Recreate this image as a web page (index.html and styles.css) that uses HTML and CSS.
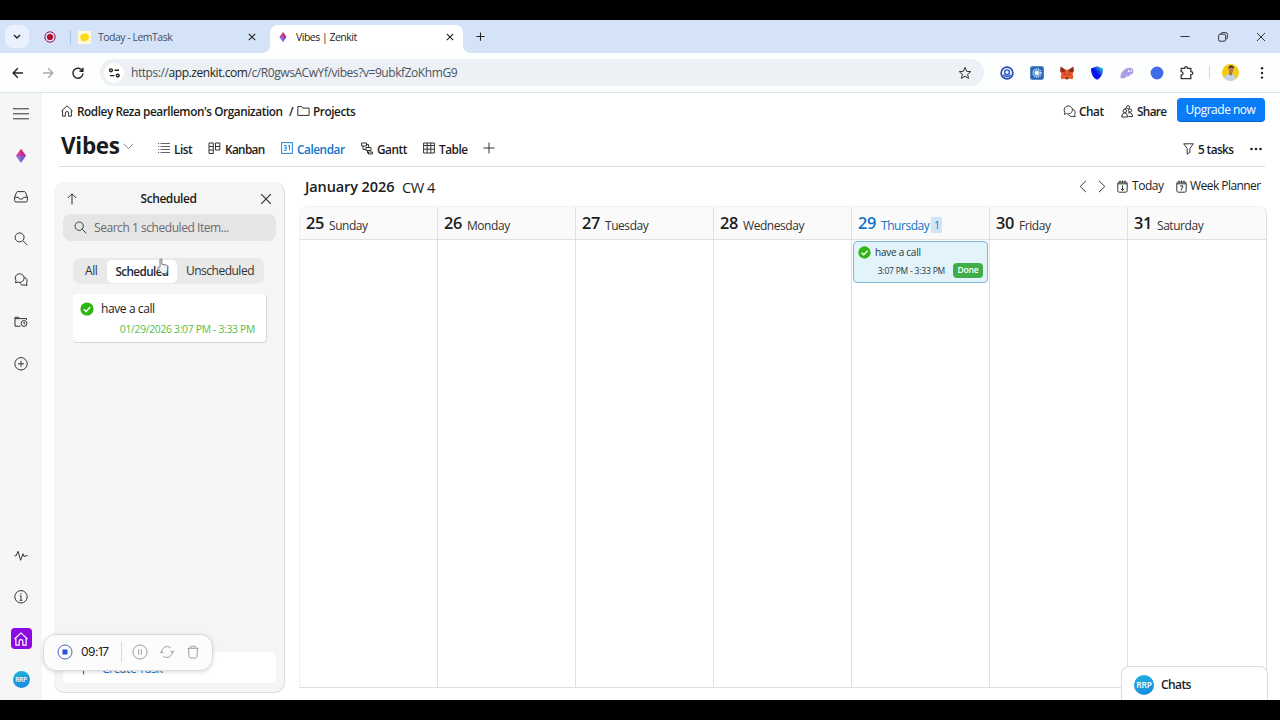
FILE: index.html
```html
<!DOCTYPE html>
<html lang="en">
<head>
  <meta charset="UTF-8" />
  <meta name="viewport" content="width=device-width, initial-scale=1.0" />
  <title>Vibes | Zenkit</title>
  <link rel="stylesheet" href="styles.css">
</head>
<body>
  <svg class="defs" width="0" height="0">
    <defs>
      <linearGradient id="gem" x1="0" y1="0" x2="1" y2="1">
        <stop offset="0.2" stop-color="#f0387c" />
        <stop offset="0.55" stop-color="#b03cb4" />
        <stop offset="0.9" stop-color="#2c6ee8" />
      </linearGradient>
      <linearGradient id="shieldFill" x1="0" y1="1" x2="1" y2="0">
        <stop offset="0.5" stop-color="#0a14f0" />
        <stop offset="1" stop-color="#30f0c0" />
      </linearGradient>
    </defs>
    <symbol id="i-gem" viewBox="0 0 10 14"><g stroke="none"><path d="M5 0 10 7 5 14 0 7z" fill="url(#gem)" /><path d="M5 0 10 7H5z" fill="#e8186c" opacity=".6" /><path d="M0 7h5v7z" fill="#6c8cf0" opacity=".7" /></g></symbol>
    <symbol id="i-x" viewBox="0 0 10 10"><path d="M1 1l8 8M9 1l-8 8" /></symbol>
    <symbol id="i-plus" viewBox="0 0 12 12"><path d="M6 .5v11M.5 6h11" /></symbol>
    <symbol id="i-chats" viewBox="0 0 14 14"><path d="M5.6 1a4.6 4.3 0 1 1-1.7 8.3L1.4 10l.6-2.2A4.3 4.3 0 0 1 5.6 1z" /><path d="M10.4 4.5a3.9 3.9 0 0 1 2.1 5.9l.5 2.3-2.2-.5a4.5 4.5 0 0 1-5.2-2" /></symbol>
    <symbol id="i-home" viewBox="0 0 12 12"><path d="M1.6 5.2v6h2.8V8.1a1.6 1.6 0 0 1 3.2 0v3.1h2.8v-6M.5 6 6 .8 11.5 6" /></symbol>
    <symbol id="i-search" viewBox="0 0 14 14"><circle cx="5.6" cy="5.6" r="4.5" /><path d="M9 9l4.3 4.3" /></symbol>
    <symbol id="i-check" viewBox="0 0 14 14"><circle cx="7" cy="7" r="6.6" fill="#2fb613" stroke="none" /><path d="M3.8 7.2 6.2 9.5l4-4.4" stroke="#fff" stroke-width="1.5" /></symbol>
  </svg>

  <div class="tabstrip">
    <div class="tab-search"><svg width="8" height="6" viewBox="0 0 8 6" class="bold"><path d="M1 1l3 3 3-3" /></svg></div>
    <svg class="record" width="12" height="12" viewBox="0 0 12 12"><circle cx="6" cy="6" r="5.2" stroke="#a01538" /><circle cx="6" cy="6" r="3.1" fill="#b0102e" stroke="none" /></svg>
    <div class="tab">
      <span class="favicon"><svg width="13" height="13" viewBox="0 0 13 13"><path d="M2.2 6.3C2.4 3 5 2.4 7.2 2.5c2.6 0 3.8 1.7 3.8 3.6 0 2.6-2.2 4.3-4.8 4.2C3.8 10.2 2.1 9 2.2 6.3z" fill="#ffd918" stroke="none" /></svg></span>
      <span class="tab-title">Today - LemTask</span>
      <svg class="bold" width="8" height="8"><use href="#i-x" /></svg>
    </div>
    <div class="tab active">
      <svg width="8" height="10"><use href="#i-gem" /></svg>
      <span class="tab-title">Vibes | Zenkit</span>
      <svg class="bold" width="8" height="8"><use href="#i-x" /></svg>
    </div>
    <svg class="new-tab bold" width="9" height="9"><use href="#i-plus" /></svg>
    <div class="window-controls">
      <svg width="10" height="10" viewBox="0 0 10 10"><path d="M.5 4.5h9" /></svg>
      <svg width="10" height="10" viewBox="0 0 10 10"><rect x=".6" y="2.2" width="7" height="7" rx="1.5" /><path d="M3 2V1.7Q3 .6 4.2.6h3.5q1.7 0 1.7 1.7v3.5q0 1.2-1.3 1.3" /></svg>
      <svg width="10" height="10"><use href="#i-x" /></svg>
    </div>
  </div>

  <div class="toolbar">
    <div class="nav-icons">
      <svg width="12" height="12" viewBox="0 0 12 12" class="bold"><path d="M11 6H1.3M5.8 1.3 1.2 6l4.6 4.7" /></svg>
      <svg width="12" height="12" viewBox="0 0 12 12" class="bold faded"><path d="M1 6h9.7M6.2 1.3 10.8 6l-4.6 4.7" /></svg>
      <svg width="12" height="12" viewBox="0 0 12 12" class="bold"><path d="M10.4 3.8A5 5 0 1 0 11 6.5M10.9.8v3.4H7.5" /></svg>
    </div>
    <div class="address">
      <span class="site-info"><svg width="11" height="10" viewBox="0 0 11 10" class="bold"><circle cx="2" cy="2.3" r="1.4" /><path d="M5.5 2.3H10M1 7.6h4.5" /><circle cx="8.8" cy="7.6" r="1.4" /></svg></span>
      <span class="url">https://<b>app.zenkit.com</b>/c/R0gwsACwYf/vibes?v=9ubkfZoKhmG9</span>
      <svg width="14" height="14" viewBox="0 0 14 14"><path d="M7 1.4 8.6 5.3l4.2.3-3.2 2.7 1 4.1L7 10.2l-3.6 2.2 1-4.1L1.2 5.6l4.2-.3z" /></svg>
    </div>
    <div class="extensions">
      <svg viewBox="0 0 14 14"><circle cx="7" cy="7" r="5.9" fill="#eef2ff" stroke="#2a4fae" stroke-width="1.7" /><circle cx="7" cy="6.3" r="2.4" stroke="#3155c4" stroke-width="1.4" /><path d="M3 8.8q4 3.5 8 0" stroke="#3155c4" stroke-width="1.3" /></svg>
      <svg viewBox="0 0 14 14"><rect x=".2" y=".2" width="13.6" height="13.6" rx="2" fill="#2868b8" stroke="none" /><circle cx="7" cy="7" r="3.9" stroke="#d3e6fa" stroke-width="1.5" stroke-dasharray="1.2 .7" /><circle cx="7" cy="7" r="2.5" fill="#fff" stroke="#7fb0e6" /></svg>
      <svg viewBox="0 0 14 14"><g stroke="none"><path d="M.8.8 5.5 3.7h3L13.2.8l.6 4.5-1.2 2.7.8 3-1 2.2-3.4-.8-1 1H6l-1-1-3.4.8L.6 11l.8-3L.2 5.3z" fill="#e8582c" /><path d="M.8.8 5.5 4 4.4 6.5.2 5.3zM13.2.8 8.5 4l1.1 2.5 4.2-1.2z" fill="#8c2c1c" /><path d="M3.6 7.5l2 .8-.3.8zM10.4 7.5l-2 .8.3.8zM5.5 11.5h3l-.4 1.2H5.9z" fill="#40201c" /></g></svg>
      <svg viewBox="0 0 14 14"><path d="M7 .2 13 2.4c0 6-2 9-6 11.4C3 11.4 1 8.4 1 2.4z" fill="url(#shieldFill)" stroke="none" /></svg>
      <svg viewBox="0 0 14 14"><path d="M.3 11C1 6 4.5 2 8.8 1.7 12.5 1.5 14 4 13.4 6.3c-.4 1.7-1.8 2.4-3 2.2-1.2 2-2.4 2.6-3.8 1.8C5 12.7 2.8 13 1.8 12 .9 12.5.2 12 .3 11z" fill="#ab9fe6" stroke="none" /><circle cx="8.8" cy="5" r=".9" fill="#fff" stroke="none" /><circle cx="11.4" cy="5" r=".8" fill="#fff" stroke="none" /></svg>
      <svg viewBox="0 0 14 14"><circle cx="7" cy="7" r="6.4" fill="#3f6ae8" stroke="none" /></svg>
      <svg viewBox="0 0 14 14" class="puzzle"><path d="M1.2 2.4h3.4q0-1.7 1.4-1.7t1.4 1.7h3.4v3.3q2 0 2 1.5t-2 1.5v3.9H1.2V9.2Q3 9 3 7.4T1.2 5.6z" /></svg>
      <span class="divider"></span>
      <svg class="profile" viewBox="0 0 17 17"><circle cx="8.5" cy="8.5" r="8.5" fill="#f4ca12" stroke="none" /><g stroke="none"><path d="M2 14Q3.5 10 8.5 9.5q5 .5 5 5.5A8.5 8.5 0 0 1 2 14z" fill="#c3d4ea" /><path d="M7 7h3.5l-.5 3.5L8.5 12 7 10z" fill="#a8714e" /><ellipse cx="9" cy="5.5" rx="2.3" ry="3" fill="#b47c58" /><path d="M6.5 5Q6 1.5 9.2 1.5T11.6 5L10.5 3.5h-3z" fill="#2c2420" /></g></svg>
      <svg viewBox="0 0 14 14"><g fill="#222" stroke="none"><circle cx="7" cy="2.3" r="1.2" /><circle cx="7" cy="7" r="1.2" /><circle cx="7" cy="11.6" r="1.2" /></g></svg>
    </div>
  </div>

  <div class="app">
    <nav class="sidebar">
      <svg width="16" height="12" viewBox="0 0 16 12"><path d="M0 1h16M0 6h16M0 11h16" /></svg>
      <svg width="10" height="14"><use href="#i-gem" /></svg>
      <svg width="14" height="12" viewBox="0 0 14 12"><path d="M.6 6.5 2.5 1.7Q2.8.8 3.8.8h6.4q1 0 1.3.9l1.9 4.8V9.7q0 1.5-1.5 1.5H2.1Q.6 11.2.6 9.7zH4.3Q4.8 8.4 7 8.4t2.7-1.9h3.7" /></svg>
      <svg width="14" height="14"><use href="#i-search" /></svg>
      <svg width="14" height="14"><use href="#i-chats" /></svg>
      <svg width="14" height="12" viewBox="0 0 14 12"><path d="M6.5 10.4H1V1.5h3.7l1.1 1.3h6.7v1.4M1 2.8h4.8" /><circle cx="10" cy="7.7" r="2.9" /><path d="M10 6v1.9h1.3" /></svg>
      <svg width="14" height="14" viewBox="0 0 14 14"><circle cx="7" cy="7" r="6.2" /><path d="M7 4v6M4 7h6" /></svg>
      <span class="spacer"></span>
      <svg width="14" height="12" viewBox="0 0 14 12"><path d="M.5 6h1.7L4 1.5l2.6 9L9 4l1.2 3 .8-1h2.5" /></svg>
      <svg width="14" height="14" viewBox="0 0 14 14"><circle cx="7" cy="7" r="6.2" /><path d="M7 6v4.5M5.8 6H7M5.7 10.5h2.6M7 3.3v1.2" /></svg>
      <span class="home-tile"><svg width="14" height="14"><use href="#i-home" /></svg></span>
      <span class="avatar small">RRP</span>
    </nav>

    <main>
      <div class="crumbs">
        <svg width="12" height="12"><use href="#i-home" /></svg>
        <span class="org">Rodley Reza pearllemon's Organization</span>
        <span class="slash">/</span>
        <svg width="13" height="12" viewBox="0 0 13 12"><path d="M.8 10.4V1.6h3.9l1.2 1.5h6.2v7.3z" /></svg>
        <span class="project">Projects</span>
        <div class="crumb-actions">
          <svg width="13" height="13"><use href="#i-chats" /></svg>
          <span class="chat">Chat</span>
          <svg width="12" height="13" viewBox="0 0 12 13"><circle cx="7" cy="2.3" r="1.6" /><circle cx="3.8" cy="6" r="1.7" /><circle cx="9" cy="5.5" r="1.6" /><path d="M.7 12q0-4 3-4.2 2.7.2 2.9 4.2zM7 8q4-1.5 4.5 3.5H7.5M5 3.3Q3.5 3.3 3.3 4" /></svg>
          <span class="share">Share</span>
          <button class="upgrade">Upgrade now</button>
        </div>
      </div>

      <div class="views">
        <h1>Vibes</h1>
        <svg class="caret" width="11" height="7" viewBox="0 0 11 7"><path d="M.7.8l4.8 4.7L10.3.8" /></svg>
        <div class="view list"><svg width="12" height="12" viewBox="0 0 12 12"><path d="M2.5 1.5H12M2.5 4.5H12M2.5 7.5H12M2.5 10.5H12M0 1.5h1.2M0 4.5h1.2M0 7.5h1.2M0 10.5h1.2" /></svg><span>List</span></div>
        <div class="view kanban"><svg width="13" height="13" viewBox="0 0 13 13"><path d="M1 1h4.3v10.5H1zM1 4.5h4.3M1 8h4.3M7.5 1h4.3v7H7.5zM7.5 4.5h4.3" /></svg><span>Kanban</span></div>
        <div class="view calendar current"><svg width="12" height="12" viewBox="0 0 12 12"><rect x=".6" y=".6" width="10.8" height="10.8" /><path d="M2.8 3.3h2.4v5H2.8M3.2 5.8h2M7 4.2l1.5-1v5.2" /></svg><span>Calendar</span></div>
        <div class="view gantt"><svg width="12" height="13" viewBox="0 0 12 13"><path d="M.6 1h5v3h-5zM5 5.5h5v3H5zM7.5 10h4v2h-4zM2 4v3.5h3M6.5 8.5V11h1M5.6 2.5h2v3" /></svg><span>Gantt</span></div>
        <div class="view table"><svg width="12" height="12" viewBox="0 0 12 12"><path d="M.6 1h10.8v10H.6zM.6 3.5h10.8M.6 7.2h10.8M4.2 1v10M7.8 1v10" /></svg><span>Table</span></div>
        <svg class="add-view" width="12" height="12"><use href="#i-plus" /></svg>
        <div class="filter">
          <svg width="11" height="12" viewBox="0 0 11 12"><path d="M.7.8h9.6L6.9 5.6v3.7L4.2 11.2V5.6z" /></svg>
          <span>5 tasks</span>
          <svg width="12" height="4" viewBox="0 0 12 4"><g fill="#222" stroke="none"><circle cx="1.5" cy="2" r="1.3" /><circle cx="6" cy="2" r="1.3" /><circle cx="10.5" cy="2" r="1.3" /></g></svg>
        </div>
      </div>

      <div class="content">
        <aside class="panel">
          <div class="panel-head">
            <svg width="10" height="12" viewBox="0 0 10 12"><path d="M5 11.5V1M.8 5 5 .8 9.2 5" /></svg>
            <span>Scheduled</span>
            <svg width="12" height="12"><use href="#i-x" /></svg>
          </div>
          <div class="search"><svg width="13" height="13"><use href="#i-search" /></svg><span>Search 1 scheduled Item...</span></div>
          <div class="segments">
            <span class="seg-all">All</span>
            <span class="seg-on">Scheduled</span>
            <span class="seg-off">Unscheduled</span>
            <svg class="pointer" width="12" height="17" viewBox="0 0 12 17"><path d="M3 9V1.8Q3 .8 3.9.8t.9 1v4.4l4.6.9q1.5.4 1.4 1.7l-.6 4.4-.8 2.3H4.9L1 10.5Q.5 9.6 1.4 9z" /></svg>
          </div>
          <div class="task">
            <div class="task-name"><svg width="14" height="14"><use href="#i-check" /></svg><span>have a call</span></div>
            <div class="task-date">01/29/2026 3:07 PM - 3:33 PM</div>
          </div>
          <div class="create"><svg width="13" height="13"><use href="#i-plus" /></svg><span>Create Task</span></div>
        </aside>

        <section class="calendar-view">
          <div class="cal-head">
            <span class="month">January 2026</span>
            <span class="week">CW 4</span>
            <div class="cal-nav">
              <svg width="8" height="13" viewBox="0 0 8 13"><path d="M7 .8 1.2 6.5 7 12.2" /></svg>
              <svg width="8" height="13" viewBox="0 0 8 13"><path d="M1 .8l5.8 5.7L1 12.2" /></svg>
              <svg width="11" height="13" viewBox="0 0 11 13"><rect x=".8" y="2" width="9.4" height="10.2" rx="1.5" /><path d="M.8 3.8h9.4M3 .6v2.6M5.5.6v2.6M8 .6v2.6M5.5 5.5v4.8M3.8 8.7l1.7 1.7 1.7-1.7" /></svg>
              <span class="today">Today</span>
              <svg width="11" height="13" viewBox="0 0 11 13"><rect x=".8" y="2" width="9.4" height="10.2" rx="1.5" /><path d="M.8 3.8h9.4M3 .6v2.6M5.5.6v2.6M8 .6v2.6M4 6h3L5 10.4" /></svg>
              <span class="planner">Week Planner</span>
            </div>
          </div>
          <div class="days">
            <div class="day"><header><b>25</b><span>Sunday</span></header></div>
            <div class="day"><header><b>26</b><span>Monday</span></header></div>
            <div class="day"><header><b>27</b><span>Tuesday</span></header></div>
            <div class="day"><header><b>28</b><span>Wednesday</span></header></div>
            <div class="day is-today">
              <header><b>29</b><span>Thursday</span><i>1</i></header>
              <div class="event">
                <div class="event-name"><svg width="13" height="13"><use href="#i-check" /></svg><span>have a call</span></div>
                <div class="event-time"><span>3:07 PM - 3:33 PM</span><em>Done</em></div>
              </div>
            </div>
            <div class="day"><header><b>30</b><span>Friday</span></header></div>
            <div class="day"><header><b>31</b><span>Saturday</span></header></div>
          </div>
        </section>
      </div>
    </main>
  </div>

  <div class="recorder">
    <svg width="16" height="16" viewBox="0 0 16 16" class="stop"><circle cx="8" cy="8" r="7" /><rect x="5.5" y="5.5" width="5" height="5" rx=".6" fill="#2b50d8" stroke="none" /></svg>
    <span class="time">09:17</span>
    <span class="divider"></span>
    <svg width="16" height="16" viewBox="0 0 16 16"><circle cx="8" cy="8" r="7" /><path d="M6.6 5.2v5.6M9.4 5.2v5.6" /></svg>
    <svg width="16" height="16" viewBox="0 0 16 16"><path d="M2.6 9A5.7 5.7 0 0 1 11.8 3.7M13.4 7a5.7 5.7 0 0 1-9.2 5.3M.8 9.2l1.8-1.8 1.9 1.7M15.2 6.8l-1.8 1.8-1.9-1.7" /></svg>
    <svg width="14" height="16" viewBox="0 0 14 16"><path d="M1.5 4.3h11M4.5 4V2.3h5V4M2.5 4.3l.6 8.2q.1 1.5 1.5 1.5h4.8q1.4 0 1.5-1.5l.6-8.2" /></svg>
  </div>

  <div class="chats"><span class="avatar">RRP</span><span>Chats</span></div>
</body>
</html>
```
FILE: styles.css
```css
* {
  box-sizing: border-box;
}
body {
  position: relative;
  margin: 0;
  width: 1280px;
  height: 720px;
  padding: 20px 0;
  overflow: hidden;
  background: #000;
  color: #1b1b1b;
  font-family: "Open Sans", "Noto Sans", sans-serif;
  font-size: 12px;
  line-height: 16px;
  letter-spacing: -.45px;
  white-space: nowrap;
}
svg {
  flex: none;
  fill: none;
  stroke: #333;
  stroke-width: 1;
}
.bold {
  stroke: #222;
  stroke-width: 1.4;
}
.puzzle {
  stroke-width: 1.3;
}
.faded {
  stroke: #aaa;
}
.defs {
  position: absolute;
}

/* browser */
.tabstrip {
  display: flex;
  align-items: center;
  height: 33px;
  padding-left: 5px;
  background: #d5e3f9;
}
.tab-search {
  display: flex;
  align-items: center;
  justify-content: center;
  width: 24px;
  height: 23px;
  border-radius: 8px;
  background: #e9f1fe;
}
.record {
  margin: 0 13px 0 15px;
}
.tab {
  display: flex;
  align-items: center;
  width: 195px;
  height: 28px;
  margin-top: 5px;
  padding: 0 8px 4px 8px;
  border-left: 1px solid transparent;
  font-size: 10.5px;
  letter-spacing: -.5px;
  color: #444f5e;
  background: linear-gradient(#a6c4ee, #a6c4ee) 0 5px / 1px 14px no-repeat;
}
.tab-title {
  flex: 1;
}
.favicon {
  height: 13px;
  margin-right: 7px;
  background: #fff9d8;
}
.tab.active {
  position: relative;
  width: 193px;
  padding: 0 9px 4px 8px;
  border-radius: 8px 8px 0 0;
  background: #fff;
  color: #222;
}
.tab.active .tab-title {
  margin-left: 9px;
}
.tab + .tab {
  margin-left: 6px;
}
.tab.active::before,
.tab.active::after {
  content: "";
  position: absolute;
  bottom: 0;
  width: 7px;
  height: 7px;
  left: -8px;
  background: radial-gradient(circle at 0 0, transparent 6.5px, #fff 7px);
}
.tab.active::after {
  left: auto;
  right: -7px;
  background: radial-gradient(circle at 100% 0, transparent 6.5px, #fff 7px);
}
.new-tab {
  margin-left: 13px;
}
.window-controls {
  display: flex;
  gap: 28px;
  margin-left: auto;
  margin-right: 14px;
}
.toolbar {
  display: flex;
  align-items: center;
  height: 40px;
  border-bottom: 1px solid #dbe5ea;
  background: #fdfefe;
}
.nav-icons {
  display: flex;
  gap: 18px;
  width: 100px;
  padding-left: 12px;
}
.address {
  display: flex;
  align-items: center;
  width: 884px;
  height: 27px;
  padding: 0 12px 0 4px;
  border-radius: 14px;
  background: #edf1f6;
}
.site-info {
  display: flex;
  align-items: center;
  justify-content: center;
  width: 20px;
  height: 20px;
  border-radius: 50%;
  background: #fff;
}
.url {
  flex: 1;
  margin-left: 7px;
  padding-top: 1px;
  color: #4c535b;
  letter-spacing: -.43px;
}
.url b {
  font-weight: 400;
  color: #1c1e21;
}
.extensions {
  display: flex;
  align-items: center;
  gap: 16px;
  margin-left: 16px;
}
.extensions svg {
  width: 14px;
  height: 14px;
}
.extensions .divider {
  width: 1px;
  height: 13px;
  margin: 0 -4px 0 -1px;
  background: #c9d7e8;
}
.extensions .profile {
  width: 17px;
  height: 17px;
}

/* app shell */
.app {
  display: flex;
  height: 607px;
  background: #fff;
}
.sidebar {
  display: flex;
  flex: none;
  flex-direction: column;
  align-items: center;
  width: 42px;
  padding-bottom: 12px;
  background: #f6f6f7;
}
.sidebar > svg {
  height: 41.6px;
}
.spacer {
  flex: 1;
}
.home-tile {
  display: flex;
  align-items: center;
  justify-content: center;
  width: 21px;
  height: 21px;
  margin: 10px 0 22px;
  border-radius: 4px;
  background: #8c0ae0;
}
.home-tile svg {
  stroke: #fff;
}
.avatar {
  display: flex;
  align-items: center;
  justify-content: center;
  width: 20px;
  height: 20px;
  border-radius: 50%;
  background: linear-gradient(160deg, #22b4de, #1686dc);
  color: #fff;
  font-size: 8.5px;
  font-weight: 600;
  letter-spacing: -.2px;
}
.avatar.small {
  width: 17px;
  height: 17px;
  font-size: 6.5px;
}
main {
  flex: 1;
  padding-right: 14px;
}
.crumbs {
  display: flex;
  align-items: center;
  height: 36px;
  padding: 0 2px 0 19px;
  font-size: 11.8px;
  font-weight: 600;
}
.org {
  width: 206px;
  margin: 0 6px 0 4px;
}
.slash {
  width: 8px;
}
.project {
  margin-left: 3px;
}
.crumb-actions {
  display: flex;
  align-items: center;
  margin-left: auto;
}
.chat {
  width: 25px;
  margin: 0 17px 0 3px;
}
.share {
  width: 30px;
  margin: 0 10px 0 4px;
  letter-spacing: -.65px;
}
.upgrade {
  width: 88px;
  height: 24px;
  margin-top: -2px;
  padding: 0 1px 1px 0;
  border: 0;
  border-bottom: 1px solid #0b63cc;
  border-radius: 4px;
  background: #0a7cfa;
  color: #fff;
  font: 12px "Open Sans", sans-serif;
  letter-spacing: -.5px;
}
.views {
  display: flex;
  align-items: center;
  height: 38px;
  margin: 0 2px 0 17px;
  padding-left: 2px;
  border-bottom: 1px solid #dedede;
  font-size: 11.8px;
  font-weight: 600;
}
h1 {
  width: 60px;
  margin: 0 2px 3px 0;
  font-size: 22.5px;
  line-height: 30px;
  font-weight: 700;
  letter-spacing: -.3px;
}
.caret {
  margin: -3px 24px 0 0;
  stroke: #888;
}
.view {
  display: flex;
  align-items: center;
  gap: 4px;
  height: 24px;
  margin-top: 3px;
}
.view svg,
.add-view {
  margin-bottom: 2px;
}
.list {
  width: 50px;
}
.list svg {
  stroke: #666;
}
.kanban {
  width: 73px;
  letter-spacing: -.65px;
}
.calendar {
  width: 80px;
}
.gantt {
  width: 62px;
}
.table {
  width: 60px;
}
.add-view {
  margin-top: 2px;
}
.current {
  color: #1273c8;
}
.current svg {
  stroke: #2487d8;
}
.filter {
  display: flex;
  align-items: center;
  margin: 3px 3px 0 auto;
}
.filter span {
  width: 37px;
  margin: 0 15px 0 4px;
  letter-spacing: -.6px;
}
.content {
  display: flex;
  margin-left: 12px;
}

/* scheduled panel */
.panel {
  display: flex;
  flex: none;
  flex-direction: column;
  width: 231px;
  height: 511px;
  margin: 15px 14px 0 0;
  padding: 0 8px 9px 9px;
  border: solid #dcdcdc;
  border-width: 0 1px 1px 0;
  border-radius: 10px;
  background: #f5f5f5;
}
.panel-head {
  display: flex;
  align-items: center;
  justify-content: space-between;
  height: 32px;
  padding: 1px 4px 0;
  font-weight: 600;
}
.search {
  display: flex;
  align-items: center;
  gap: 7px;
  height: 27px;
  padding-left: 11px;
  border-radius: 8px;
  background: #e5e5e5;
  color: #6c6c6c;
}
.segments {
  position: relative;
  display: flex;
  align-items: center;
  width: 191px;
  height: 26px;
  margin: 17px 0 10px 10px;
  border-radius: 8px;
  background: #e9e9e9;
  color: #333;
}
.seg-all {
  width: 34px;
  padding-left: 12px;
}
.seg-on {
  width: 70px;
  height: 23px;
  border-radius: 5px;
  background: #fff;
  color: #1a2936;
  font-size: 11.7px;
  font-weight: 600;
  line-height: 23px;
  letter-spacing: -.6px;
  text-align: center;
}
.seg-off {
  margin-left: 9px;
  letter-spacing: -.5px;
}
.pointer {
  position: absolute;
  left: 84px;
  top: 0;
  fill: #f2f2f5;
  stroke: #767680;
}
.task {
  width: 194px;
  height: 49px;
  margin-left: 10px;
  padding: 7px 11px 0 7px;
  border-right: 1px solid #d4d4d4;
  border-bottom: 1px solid #d4d4d4;
  border-radius: 4px;
  background: #fff;
}
.task-name {
  display: flex;
  align-items: center;
  gap: 7px;
  letter-spacing: -.4px;
}
.task-date {
  margin-top: 5px;
  color: #53bd4a;
  font-size: 10.3px;
  line-height: 14px;
  letter-spacing: -.28px;
  text-align: right;
}
.create {
  display: flex;
  align-items: center;
  gap: 12px;
  height: 31px;
  margin-top: auto;
  padding: 2px 0 0 14px;
  border-radius: 5px;
  background: #fff;
  color: #1671c2;
}
.create svg {
  stroke: #1671c2;
}

/* calendar */
.calendar-view {
  flex: none;
  width: 968px;
}
.cal-head {
  display: flex;
  align-items: center;
  height: 39px;
  padding: 0 6px;
}
.month {
  width: 97px;
  font-size: 14.5px;
  font-weight: 600;
  letter-spacing: -.1px;
}
.week {
  font-size: 14.6px;
}
.cal-nav {
  display: flex;
  align-items: center;
  margin-left: auto;
  padding-bottom: 1px;
}
.cal-nav svg:nth-of-type(-n+2) {
  margin-right: 11px;
}
.today {
  width: 31px;
  margin: 0 13px 0 4px;
}
.planner {
  width: 71px;
  margin-left: 3px;
  letter-spacing: -.55px;
}
.days {
  display: flex;
  height: 482px;
  border: 1px solid #dfdfdf;
  border-top-color: #f3f3f3;
  border-left-color: #f0f0f0;
  border-radius: 8px 8px 0 0;
  overflow: hidden;
}
.day {
  flex: 0 0 138px;
  border-right: 1px solid #e0e0e0;
}
.day:last-child {
  border: 0;
}
.day header {
  display: flex;
  height: 33px;
  padding: 7px 0 0 6px;
  border-bottom: 1px solid #e0e0e0;
  background: #fafafa;
  color: #333;
}
.day header b {
  width: 18px;
  margin-right: 5px;
  font-size: 16.3px;
  line-height: 19px;
  font-weight: 600;
  letter-spacing: -.3px;
  color: #1b1b1b;
}
.day header span {
  margin-top: 4px;
}
.is-today header,
.day.is-today header b {
  color: #1273c8;
}
.day i {
  width: 11px;
  height: 16px;
  margin: 3px 0 0 2px;
  background: #cfe5f5;
  font-size: 10px;
  font-style: normal;
  text-align: center;
}
.event {
  width: 135px;
  height: 42px;
  margin: 1px 0 0 1px;
  padding: 4px;
  border: 1px solid #7fb7de;
  border-radius: 4px;
  background: #e3f3fa;
  color: #24343c;
  font-size: 10px;
  line-height: 14px;
  letter-spacing: -.25px;
}
.event-name {
  display: flex;
  align-items: center;
  gap: 4px;
  margin-top: -1px;
}
.event-time {
  display: flex;
  align-items: center;
  justify-content: flex-end;
  gap: 8px;
  margin-top: 4px;
  font-size: 8.5px;
  letter-spacing: -.2px;
}
.event-time em {
  width: 30px;
  height: 15px;
  border-radius: 4px;
  background: #3fae49;
  color: #fff;
  font-style: normal;
  font-weight: 600;
  line-height: 14px;
  text-align: center;
}

/* floating widgets */
.recorder {
  position: absolute;
  left: 43px;
  top: 634px;
  display: flex;
  align-items: center;
  gap: 11px;
  width: 170px;
  height: 37px;
  padding: 0 0 1px 13px;
  border: 1px solid #dcdcdc;
  border-radius: 13px;
  background: #fcfcfc;
  box-shadow: 0 1px 4px rgba(0, 0, 0, .15);
}
.recorder svg {
  stroke: #a0a0a0;
}
.recorder .stop {
  stroke: #4a66c4;
}
.recorder .time {
  width: 28px;
  margin: 0 1px 0 -3px;
  font-family: Inter, sans-serif;
  font-size: 12px;
  letter-spacing: -.5px;
}
.recorder .divider {
  width: 1px;
  height: 20px;
  margin-right: -1.5px;
  background: #d8d8d8;
}
.chats {
  position: absolute;
  left: 1121px;
  top: 666px;
  display: flex;
  align-items: center;
  gap: 7px;
  width: 147px;
  height: 34px;
  padding: 2px 0 0 12px;
  border: 1px solid #dcdcdc;
  border-bottom: 0;
  border-radius: 8px 8px 0 0;
  background: #fff;
  font-weight: 600;
  letter-spacing: -.6px;
}
```
